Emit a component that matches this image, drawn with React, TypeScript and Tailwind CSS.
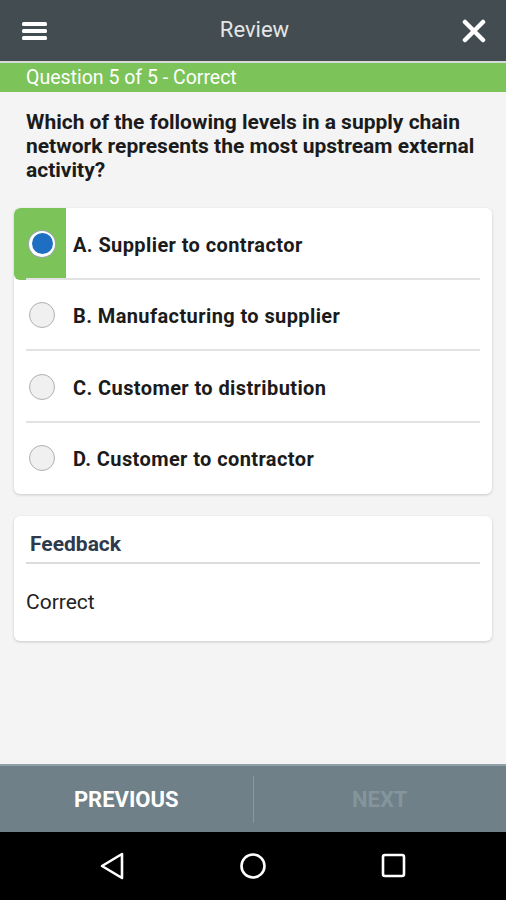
import React from 'react';

const OPTIONS = [
  { label: 'A. Supplier to contractor', selected: true },
  { label: 'B. Manufacturing to supplier', selected: false },
  { label: 'C. Customer to distribution', selected: false },
  { label: 'D. Customer to contractor', selected: false },
];

const App: React.FC = () => {
  return (
    <div className="w-[506px] h-[900px] flex flex-col bg-[#f4f4f4] overflow-hidden" style={{ fontFamily: 'Roboto, "Liberation Sans", sans-serif' }}>
      {/* Top bar */}
      <div className="h-[61px] shrink-0 bg-[#434d51] flex items-center justify-between px-[22px]">
        <svg width="25" height="20" viewBox="0 0 25 20">
          <rect x="0" y="1" width="25" height="4" rx="1.5" fill="#fff" />
          <rect x="0" y="8" width="25" height="4" rx="1.5" fill="#fff" />
          <rect x="0" y="15" width="25" height="4" rx="1.5" fill="#fff" />
        </svg>
        <span className="text-[22px] text-[#e4e6e6] -mt-[2px]">Review</span>
        <svg width="24" height="24" viewBox="0 0 24 24" className="-mr-[2px]">
          <path d="M3 3 L21 21 M21 3 L3 21" stroke="#fff" strokeWidth="4.5" strokeLinecap="round" />
        </svg>
      </div>
      <div className="h-[2px] shrink-0 bg-[#d4dbd8]" />
      <div className="h-[29px] shrink-0 bg-[#7cc35a] flex items-center px-[26px]">
        <span className="text-[19.5px] text-white leading-none">Question 5 of 5 - Correct</span>
      </div>

      {/* Content */}
      <div className="flex-1 px-[14px]">
        <p className="px-[12px] pt-[18px] text-[21px] leading-[24px] font-bold text-[#1b1b1b]">
          Which of the following levels in a supply chain network represents the most upstream external activity?
        </p>

        <div className="mt-[26px] bg-white rounded-[6px] shadow-[0_1px_3px_rgba(0,0,0,0.18)] overflow-hidden">
          {OPTIONS.map((o, i) => (
            <div key={i} className="relative h-[71.5px] flex items-center">
              {o.selected && <div className="absolute left-0 top-0 bottom-0 w-[52px] bg-[#7cc35a] rounded-l-[6px]" />}
              <div className="relative w-[52px] flex justify-center pl-[4px]">
                <div className={`w-[26px] h-[26px] rounded-full flex items-center justify-center ${o.selected ? 'bg-white border-2 border-white shadow-[0_0_0_1px_#9aa]' : 'bg-[#f0f0f0] border border-[#b0b0b0]'}`}>
                  {o.selected && <div className="w-[21px] h-[21px] rounded-full bg-[#1e6fc2]" />}
                </div>
              </div>
              <span className="ml-[7px] mt-[2px] text-[20px] font-bold tracking-[0.4px] text-[#1b1b1b]">{o.label}</span>
              {i < OPTIONS.length - 1 && <div className="absolute left-[12px] right-[12px] bottom-0 h-[2px] bg-[#e2e2e2]" />}
            </div>
          ))}
        </div>

        <div className="mt-[22px] bg-white rounded-[6px] shadow-[0_1px_3px_rgba(0,0,0,0.18)] h-[125px] px-[12px]">
          <div className="h-[48px] flex items-end pb-[2px] px-[4px] border-b-2 border-[#dcdcdc]">
            <span className="text-[21px] font-bold text-[#2e3a4c]">Feedback</span>
          </div>
          <p className="pt-[23px] text-[21px] text-[#222]">Correct</p>
        </div>
      </div>

      {/* Bottom buttons */}
      <div className="h-[68px] shrink-0 bg-[#6f8088] border-t-2 border-[#8fa0a8] flex items-center">
        <div className="flex-1 flex justify-center">
          <span className="text-[22px] font-bold text-white">PREVIOUS</span>
        </div>
        <div className="w-[1px] h-[47px] bg-[#8a9aa2]" />
        <div className="flex-1 flex justify-center">
          <span className="text-[22px] font-bold text-[#84959c]">NEXT</span>
        </div>
      </div>

      {/* Android nav */}
      <div className="h-[68px] shrink-0 bg-black flex items-center justify-center gap-[114px]">
        <svg width="26" height="28" viewBox="0 0 26 28">
          <path d="M23 2 L3 14 L23 26 Z" fill="none" stroke="#fff" strokeWidth="2.6" strokeLinejoin="round" />
        </svg>
        <svg width="28" height="28" viewBox="0 0 28 28">
          <circle cx="14" cy="14" r="11.5" fill="none" stroke="#fff" strokeWidth="2.6" />
        </svg>
        <svg width="26" height="26" viewBox="0 0 26 26">
          <rect x="2" y="2" width="21" height="21" rx="2" fill="none" stroke="#fff" strokeWidth="2.6" />
        </svg>
      </div>
    </div>
  );
};

export default App;
